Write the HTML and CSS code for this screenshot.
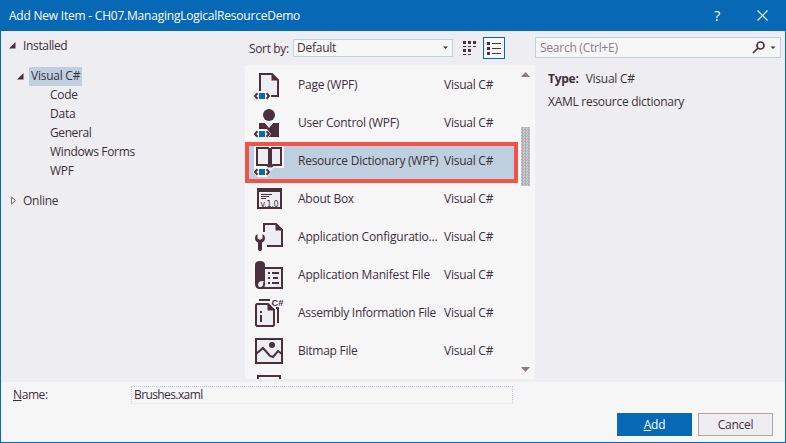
FILE: index.html
```html
<!DOCTYPE html>
<html lang="en">
<head>
<meta charset="utf-8">
<title>Add New Item</title>
<link rel="stylesheet" href="styles.css">
</head>
<body>
<svg class="defs" width="0" height="0">
  <symbol id="tag" viewBox="0 0 34 38">
    <path class="halo" d="M0 30l4-5h10l4 5-4 5H4z"/>
    <path class="blue" d="M6 27h6v6H6z"/>
    <path class="line" d="M4.500 27.300L2 30l2.500 2.700M13.500 27.300L16 30l-2.500 2.700"/>
  </symbol>
</svg>
<div class="window">
  <header class="titlebar">
    <span class="title">Add New Item - CH07.ManagingLogicalResourceDemo</span>
    <span class="help">?</span>
    <svg class="close" width="11" height="11" viewBox="0 0 11 11"><path d="M.5.5l10 10M10.5.5l-10 10"/></svg>
  </header>
  <main class="main">
    <nav class="tree">
      <div class="node top"><svg width="7" height="7" viewBox="0 0 7 7"><path d="M6.5 0v6.5H0z"/></svg><span>Installed</span></div>
      <div class="node lang"><svg width="7" height="7" viewBox="0 0 7 7"><path d="M6.5 0v6.5H0z"/></svg><span class="current">Visual C#</span></div>
      <div class="leaf">Code</div>
      <div class="leaf">Data</div>
      <div class="leaf general">General</div>
      <div class="leaf wide">Windows Forms</div>
      <div class="leaf">WPF</div>
      <div class="node online"><svg width="6" height="9" viewBox="0 0 6 9"><path class="open" d="M.5 1v7l4-3.500z"/></svg><span>Online</span></div>
    </nav>
    <section class="center">
      <div class="tools">
        <label>Sort by:</label>
        <div class="select"><span>Default</span><svg width="7" height="4" viewBox="0 0 7 4"><path d="M1 .5h5L3.500 3z"/></svg></div>
        <svg class="grid" width="14" height="14" viewBox="0 0 14 14"><path d="M0 0h3v3H0zM5 0h3v3H5zM10 0h3v3h-3zM0 5h3v1H0zM5 5h3v1H5zM10 5h3v1h-3zM0 8h3v3H0zM5 8h3v3H5zM0 13h3v1H0zM5 13h3v1H5z"/></svg>
        <div class="toggle"><svg width="14" height="13" viewBox="0 0 14 13"><path d="M0 0h3v3H0zM0 5h3v3H0zM0 10h3v3H0zM5 1h9v1H5zM5 6h9v1H5zM5 11h9v1H5z"/></svg></div>
      </div>
      <div class="list">
        <div class="rows">
          <div class="row"><svg class="icon" viewBox="0 0 34 38"><path class="paper" d="M7 8h12l6 6v16H7z"/><path class="line" d="M7 27V8h12l6 6v16h-7"/><path class="ink" d="M18.500 7L26 14.500h-7.500z"/><use href="#tag"/></svg><span class="name">Page (WPF)</span><span class="kind">Visual C#</span></div>
          <div class="row"><svg class="icon" viewBox="0 0 34 38"><circle class="ink" cx="16" cy="11" r="6"/><path class="ink" d="M6 19h6l4 5 4-5h6v14H6z"/><path class="paper" d="M12 19h8l-4 4z"/><use href="#tag"/></svg><span class="name">User Control (WPF)</span><span class="kind">Visual C#</span></div>
          <div class="row selected"><svg class="icon" viewBox="0 0 34 38"><path class="halo" d="M1 4h30v22H20l-3 3H1z"/><path class="paper" d="M4 6h25v17H4z"/><path class="line" d="M16 23V7l-1-1H4v17h10l2 2M18 23V7l1-1h9v17h-8l-2 2"/><path class="ink" d="M15.500 7h3v17l-1.500 2-1.500-2z"/><use href="#tag"/></svg><span class="name">Resource Dictionary (WPF)</span><span class="kind">Visual C#</span></div>
          <div class="row"><svg class="icon" viewBox="0 0 34 38"><path class="paper" d="M5 9h23v19H5z"/><path class="line" d="M5 9h23v19H5z"/><path class="ink" d="M4 8h25v4H4zM8 14h11v1H8zM8 16h8v1H8zM8 18h5v1H8z"/><text x="7.500" y="26.500" textLength="18" class="version">v.1.0</text></svg><span class="name">About Box</span><span class="kind">Visual C#</span></div>
          <div class="row"><svg class="icon" viewBox="0 0 34 38"><path class="paper" d="M11 6h12l6 6v16H11z"/><path class="line" d="M11 14V6h12l6 6v16H14"/><path class="ink" d="M22.500 5L30 12.500h-7.500zM4.500 16Q2 17 2 20t3 4.500V32q2 2 4 0v-7.500q3-1.500 3-4.500t-2.500-4v4.500L8 21.500H6l-1.500-1z"/></svg><span class="name config">Application Configuratio...</span><span class="kind">Visual C#</span></div>
          <div class="row"><svg class="icon" viewBox="0 0 34 38"><path class="paper" d="M11 12h18v20H6z"/><path class="line" d="M11 12h18v20H6"/><path class="ink" d="M2 9q0-4 5-4t5 4v18q0-2-3-2t-4 3q0 2 2 5-5 0-5-5zM15 16h2v2h-2zM15 21h2v2h-2zM15 26h2v2h-2zM19 16h7v2h-7zM20 21h5v2h-5zM19 26h7v2h-7z"/><path class="line" d="M8 32q4-1 3-6"/></svg><span class="name config">Application Manifest File</span><span class="kind">Visual C#</span></div>
          <div class="row"><svg class="icon" viewBox="0 0 34 38"><path class="line" d="M6 6h11M25 14v15"/><path class="paper" d="M3 10h12l6 6v16H3z"/><path class="line" d="M4 10h11l6 6v15l-1 1H4l-1-1V11z"/><path class="ink" d="M14.500 9L22 16.500h-7.500zM7 17h2v2H7zM7 21h2v7H7zM23 13h3v2h-3z"/><text x="18.500" y="12" textLength="12" lengthAdjust="spacingAndGlyphs" class="sharp">C#</text></svg><span class="name assembly">Assembly Information File</span><span class="kind">Visual C#</span></div>
          <div class="row"><svg class="icon" viewBox="0 0 34 38"><path class="paper" d="M3 7h26v24H3z"/><path class="line" d="M3 7h26v24H3zM3 22l7-6 7 8 3 1 5-6 4 3"/><circle class="ink" cx="19" cy="13" r="3"/></svg><span class="name">Bitmap File</span><span class="kind">Visual C#</span></div>
          <div class="row"><svg class="icon" viewBox="0 0 34 38"><path class="line" d="M5 15V6h22v9"/></svg></div>
        </div>
        <div class="scroll">
          <svg width="9" height="5" viewBox="0 0 9 5"><path d="M0 5l4.500-5L9 5z"/></svg>
          <div class="thumb"></div>
          <svg width="9" height="5" viewBox="0 0 9 5"><path d="M0 0l4.500 5L9 0z"/></svg>
        </div>
      </div>
    </section>
    <aside class="details">
      <div class="search"><span>Search (Ctrl+E)</span>
        <svg class="lens" width="13" height="13" viewBox="0 0 13 13"><circle cx="8.500" cy="4.500" r="3.500"/><path d="M6 7l-5 5"/></svg>
        <svg class="drop" width="6" height="4" viewBox="0 0 6 4"><path d="M.5.5h5L3 3z"/></svg>
      </div>
      <p class="type"><b>Type:</b><span>Visual C#</span></p>
      <p class="about">XAML resource dictionary</p>
    </aside>
  </main>
  <footer class="footer">
    <div class="field"><label><u>N</u>ame:</label><div class="input">Brushes.xaml</div></div>
    <div class="buttons"><div class="button primary"><span><u>A</u>dd</span></div><div class="button"><span>Cancel</span></div></div>
  </footer>
</div>
</body>
</html>
```
FILE: styles.css
```css
* { box-sizing: border-box; }
body { margin: 0; font: 12px/18px "Open Sans", "Noto Sans", sans-serif; color: #3b303a; letter-spacing: -0.25px; }
.defs { position: absolute; }
.window { width: 786px; height: 443px; border: 1px solid #0768b5; border-top: 0; background: #f6f6f7; display: flex; flex-direction: column; white-space: nowrap; }
svg { display: block; flex: none; fill: #49303c; }

.titlebar { height: 31px; flex: none; background: #0768b5; color: #fff; display: flex; align-items: center; padding: 0 17px 0 8px; }
.title { flex: 1; letter-spacing: -0.22px; }
.help { font-size: 14px; margin-right: 37px; }
.close { stroke: #fff; stroke-width: 1.1; }

.main { height: 351px; flex: none; background: #eeeef2; display: flex; }
.tree { width: 244px; padding-top: 5px; }
.node { display: flex; align-items: center; height: 19px; }
.top { padding-left: 8px; gap: 7px; letter-spacing: -0.35px; }
.lang { padding-left: 16px; gap: 5px; margin-top: 12px; }
.current { background: #c0cfdf; height: 19px; width: 53px; padding-left: 2px; }
.leaf { height: 19px; padding-left: 49px; }
.general { letter-spacing: -0.4px; }
.wide { letter-spacing: -0.35px; }
.online { padding-left: 10px; gap: 6px; margin-top: 10px; }
.open { fill: none; stroke: #776d75; }

.center { width: 290px; display: flex; flex-direction: column; }
.tools { height: 34px; display: flex; align-items: center; padding-left: 4px; }
.tools label { width: 44px; padding-top: 1px; letter-spacing: -0.35px; }
.select { width: 160px; height: 18px; border: 1px solid #c0cfdf; background: #f6f6f7; display: flex; align-items: center; justify-content: space-between; padding: 0 3px; }
.grid { margin-left: 10px; }
.toggle { width: 22px; height: 22px; border: 1px solid #0768b5; background: #f6f6f7; display: flex; align-items: center; justify-content: center; margin-left: 6px; }
.list { height: 314px; background: #f6f6f7; display: flex; overflow: hidden; padding-top: 1px; }
.rows { width: 273px; }
.row { height: 38px; display: flex; align-items: center; padding-left: 8px; }
.selected { height: 41px; margin-bottom: -3px; border: 4px solid #f15349; background: #c0cfdf; padding-left: 4px; }
.selected .icon { margin-top: -3px; }
.selected span { margin-top: -3px; }
.icon { width: 34px; height: 38px; }
.name { width: 157px; padding-left: 11px; }
.config { letter-spacing: -0.18px; }
.assembly { letter-spacing: -0.28px; }
.kind { width: 60px; }
.line { fill: none; stroke: #49303c; stroke-width: 2; }
.ink { fill: #49303c; }
.paper { fill: #eeeef2; }
.halo { fill: #f6f6f7; }
.blue { fill: #0768b5; }
.version { font: 8px "DejaVu Sans", sans-serif; letter-spacing: 0; }
.sharp { font: bold 9px "Liberation Sans", sans-serif; letter-spacing: 0; }
.scroll { width: 17px; display: flex; flex-direction: column; align-items: center; padding: 6px 2px 7px 0; }
.scroll svg { fill: #8b7b80; }
.thumb { width: 9px; height: 59px; margin: 50px 0 auto; background: repeating-conic-gradient(#b8aaa6 0 25%, #c0cfdf 0 50%) 0 0 / 3px 3px; }

.details { flex: 1; }
.search { width: 246px; height: 21px; margin-top: 6px; border: 1px solid #c0cfdf; background: #f6f6f7; display: flex; align-items: center; padding: 0 4px; color: #88808a; }
.search span { flex: 1; }
.lens { fill: none; stroke: #49303c; stroke-width: 1.7; }
.drop { margin-left: 5px; }
.type, .about { margin: 0 0 0 13px; height: 23px; }
.type { margin-top: 12px; display: flex; gap: 7px; }
.about { letter-spacing: -0.28px; }

.footer { flex: 1; padding: 4px 12px 0; }
.field { display: flex; height: 18px; }
.field label { width: 118px; letter-spacing: -0.4px; }
.input { width: 382px; height: 18px; border: 1px dotted #b9cbdf; border-bottom: 1px solid #eeeef2; padding-left: 2px; line-height: 16px; letter-spacing: -0.6px; }
.buttons { display: flex; justify-content: flex-end; gap: 6px; margin-top: 9px; }
.button { width: 75px; height: 23px; border: 1px solid #b5a49c; background: #eeeef2; display: flex; align-items: center; justify-content: center; }
.primary { background: #0768b5; border-color: #0768b5; color: #fff; }
```
